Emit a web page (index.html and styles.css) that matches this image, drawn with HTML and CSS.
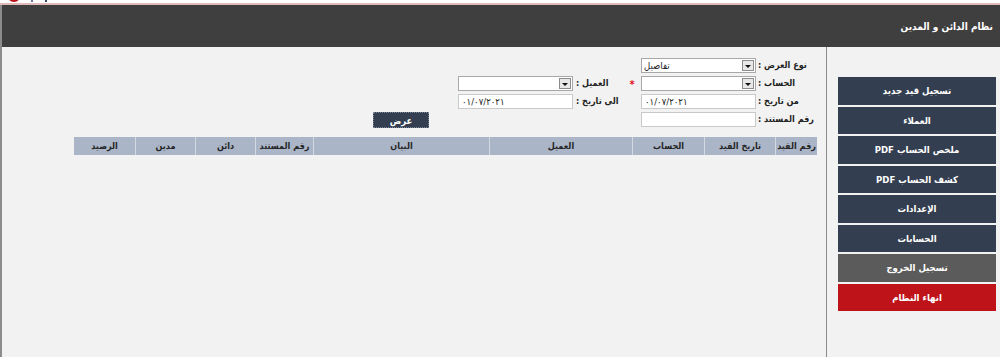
FILE: index.html
```html
<!DOCTYPE html>
<html lang="ar" dir="rtl">
<head>
    <meta charset="UTF-8">
    <title>نظام الدائن و المدين</title>
    <link rel="stylesheet" href="styles.css">
</head>
<body>
    <div class="topstrip">
        <span class="logo-mark"></span>
        <span class="logo-dots"></span>
    </div>

    <div class="app">
        <div class="titlebar">نظام الدائن و المدين</div>

        <div class="content">
            <div class="side">
                <div class="nav-btn">تسجيل قيد جديد</div>
                <div class="nav-btn">العملاء</div>
                <div class="nav-btn">ملخص الحساب PDF</div>
                <div class="nav-btn">كشف الحساب PDF</div>
                <div class="nav-btn">الإعدادات</div>
                <div class="nav-btn">الحسابات</div>
                <div class="nav-btn logout">تسجيل الخروج</div>
                <div class="nav-btn shutdown">انهاء النظام</div>
            </div>

            <div class="main">
                <div class="filters">
                    <label class="lbl r1 c1">نوع العرض :</label>
                    <div class="combo r1 c2"><span class="combo-text">تفاصيل</span><span class="combo-btn"></span></div>

                    <label class="lbl r2 c1">الحساب :</label>
                    <div class="combo r2 c2"><span class="combo-text"></span><span class="combo-btn"></span></div>
                    <span class="req r2 c3">*</span>
                    <label class="lbl r2 c4">العميل :</label>
                    <div class="combo r2 c5"><span class="combo-text"></span><span class="combo-btn"></span></div>

                    <label class="lbl r3 c1">من تاريخ :</label>
                    <input class="field r3 c2" type="text" value="٠١/٠٧/٢٠٢١">
                    <label class="lbl r3 c4">الى تاريخ :</label>
                    <input class="field r3 c5" type="text" value="٠١/٠٧/٢٠٢١">

                    <label class="lbl r4 c1">رقم المستند :</label>
                    <input class="field r4 c2" type="text" value="">
                    <button class="show-btn r4 c6">عرض</button>
                </div>

                <div class="grid-head">
                    <div class="th w-no">رقم القيد</div>
                    <div class="th w-date">تاريخ القيد</div>
                    <div class="th w-acc">الحساب</div>
                    <div class="th w-client">العميل</div>
                    <div class="th w-desc">البيان</div>
                    <div class="th w-doc">رقم المستند</div>
                    <div class="th w-num">دائن</div>
                    <div class="th w-num">مدين</div>
                    <div class="th w-bal">الرصيد</div>
                </div>
            </div>
        </div>
    </div>
</body>
</html>
```

FILE: styles.css
```css
* { box-sizing: border-box; }
html, body { margin: 0; padding: 0; }
body { width: 1000px; height: 357px; overflow: hidden; background: #f2f2f2; font-family: Tahoma, "DejaVu Sans Condensed", "DejaVu Sans", sans-serif; color: #222; }

.topstrip { height: 5px; background: #fff; border-bottom: 2px solid #e2b9b9; position: relative; overflow: hidden; }
.topstrip::before { content: ""; position: absolute; left: 0; right: 0; top: 3px; height: 1px; background: #b86a6a; }
.logo-mark { position: absolute; left: 9px; top: -5px; width: 10px; height: 7px; border-radius: 50%; background: #c0141c; }
.logo-dots { position: absolute; left: 31px; top: 0; width: 16px; height: 2px; border-left: 2px solid #6c7aa0; border-right: 2px solid #3c466a; }

.app { height: 352px; border-left: 2px solid #8c8c8c; display: flex; flex-direction: column; }
.titlebar { height: 42px; background: #3f3f3f; color: #fff; font-weight: bold; font-size: 10px; padding: 0 7px; display: flex; align-items: center; }

.content { flex: 1; display: flex; }
.side { width: 174px; border-left: 1px solid #8a8a8a; padding: 30px 4px 0 11px; }
.nav-btn { height: 27.5px; margin-bottom: 2px; background: #333e50; color: #fff; font-weight: bold; font-size: 9.5px; display: flex; align-items: center; justify-content: center; }
.nav-btn.logout { background: #5b5b5b; }
.nav-btn.shutdown { background: #bd1319; }

.main { flex: 1; padding: 11px 17px 0 0; }

.filters { display: grid; grid-template-columns: 53px 115px 18px 50px 115px 85px; grid-auto-rows: 15px; row-gap: 3px; }
.r1 { grid-row: 1; } .r2 { grid-row: 2; } .r3 { grid-row: 3; } .r4 { grid-row: 4; }
.c1 { grid-column: 1; } .c2 { grid-column: 2; } .c3 { grid-column: 3; } .c4 { grid-column: 4; } .c5 { grid-column: 5; } .c6 { grid-column: 6; }

.lbl { justify-self: end; font-weight: bold; font-size: 9px; line-height: 15px; white-space: nowrap; }
.lbl.c1 { margin-left: 2px; }
.lbl.c4 { margin-left: 3px; }
.req { color: #e0141c; font-weight: bold; font-size: 11px; line-height: 17px; text-align: center; }

.combo { direction: ltr; display: flex; background: #fff; border: 1px solid #a8a8a8; height: 15px; }
.combo-text { flex: 1; font-size: 9.5px; line-height: 13px; padding-left: 2px; text-align: left; direction: rtl; unicode-bidi: plaintext; }
.combo-btn { width: 12px; margin: 1px; background: #e8e8e8; border: 1px solid #8c8c8c; position: relative; }
.combo-btn::after { content: ""; position: absolute; left: 2px; top: 4px; border-left: 3px solid transparent; border-right: 3px solid transparent; border-top: 3px solid #111; }

.field { direction: ltr; height: 15px; width: 115px; border: 1px solid #c9c9c9; background: #fff; font-family: inherit; font-size: 9.5px; padding: 0 3px; margin: 0; outline: none; color: #222; }

.show-btn { justify-self: end; width: 56px; height: 16px; background: #333e50; color: #fff; border: 1px dotted #7d8698; font-family: inherit; font-weight: bold; font-size: 9.5px; padding: 0; margin: 0; }

.grid-head { display: flex; width: 743px; margin: 10px -8px 0 0; background: #aab5c7; height: 18px; }
.th { font-weight: bold; font-size: 9px; color: #252525; display: flex; align-items: center; justify-content: center; border-left: 1px solid #d3d9e3; white-space: nowrap; }
.th:last-child { border-left: none; }
.w-no { width: 42px; }
.w-date { width: 71px; }
.w-acc { width: 72px; }
.w-client { width: 143px; }
.w-desc { width: 176px; }
.w-doc { width: 58px; }
.w-num { width: 60px; }
.w-bal { width: 61px; }
```
